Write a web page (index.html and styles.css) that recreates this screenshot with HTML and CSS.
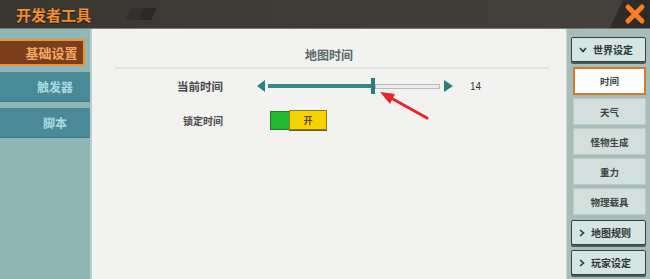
FILE: index.html
```html
<!DOCTYPE html>
<html>
	<head>
		<title>开发者工具</title>
		<link rel="stylesheet" href="styles.css">
	</head>
	<body>
		<div class="window">
			<div class="topbar">
				<div class="title">开发者工具</div>
				<div class="deco"><span></span><span></span></div>
				<div class="spacer"></div>
				<div class="close-area">
					<svg class="close-icon" width="22" height="22" viewBox="0 0 22 22">
						<path d="M4 4 L18 18 M18 4 L4 18" stroke="#3a2418" stroke-width="7" stroke-linecap="round"/>
						<path d="M4 4 L18 18 M18 4 L4 18" stroke="#f77b2d" stroke-width="5" stroke-linecap="round"/>
					</svg>
				</div>
			</div>
			<div class="content">
				<div class="left-nav">
					<div class="nav-btn active">基础设置</div>
					<div class="nav-btn">触发器</div>
					<div class="nav-btn">脚本</div>
				</div>
				<div class="main">
					<div class="section-title">地图时间</div>
					<div class="section-line"></div>
					<div class="row row-time">
						<div class="label">当前时间</div>
						<div class="slider">
							<span class="arrow arrow-left"></span>
							<div class="track">
								<span class="fill"></span>
								<span class="thumb"></span>
								<span class="rest"></span>
							</div>
							<span class="arrow arrow-right"></span>
						</div>
						<div class="value">14</div>
					</div>
					<div class="row row-lock">
						<div class="label">锁定时间</div>
						<div class="toggle">
							<span class="toggle-on"></span>
							<span class="toggle-knob">开</span>
						</div>
					</div>
					<svg class="pointer" width="60" height="40" viewBox="0 0 60 40">
						<line x1="55" y1="31" x2="19" y2="11" stroke="#e8262a" stroke-width="3" stroke-linecap="round"/>
						<polygon points="8,5 23,7 18,17" fill="#e8262a"/>
					</svg>
				</div>
				<div class="right-nav">
					<div class="group-head">
						<svg width="8" height="6" viewBox="0 0 8 6"><path d="M1 1 L4 4.5 L7 1" stroke="#2c3634" stroke-width="1.6" fill="none"/></svg>
						<span>世界设定</span>
					</div>
					<div class="sub-item active">时间</div>
					<div class="sub-item">天气</div>
					<div class="sub-item">怪物生成</div>
					<div class="sub-item">重力</div>
					<div class="sub-item">物理载具</div>
					<div class="group-head">
						<svg width="6" height="8" viewBox="0 0 6 8"><path d="M1 1 L4.5 4 L1 7" stroke="#2c3634" stroke-width="1.6" fill="none"/></svg>
						<span>地图规则</span>
					</div>
					<div class="group-head">
						<svg width="6" height="8" viewBox="0 0 6 8"><path d="M1 1 L4.5 4 L1 7" stroke="#2c3634" stroke-width="1.6" fill="none"/></svg>
						<span>玩家设定</span>
					</div>
				</div>
			</div>
		</div>
	</body>
</html>
```

FILE: styles.css
```css
body {
	margin: 0;
	overflow: hidden;
	background-color: #f2f2f0;
	font-family: "Noto Sans CJK SC", "Noto Sans", sans-serif;
}

.window {
	width: 650px;
	height: 279px;
	display: flex;
	flex-direction: column;
	overflow: hidden;
}

.topbar {
	height: 28px;
	display: flex;
	align-items: center;
	background: linear-gradient(90deg, #3a3733 0%, #45413c 100%);
	border-bottom: 1px solid #7c7873;
}

.title {
	margin-left: 16px;
	color: #f08e2c;
	font-size: 15px;
	font-weight: 700;
	line-height: 15px;
	text-shadow: 0 1px 1px rgba(0, 0, 0, 0.5);
}

.deco {
	margin-left: 37px;
	display: flex;
	transform: skewX(-25deg);
}

.deco span {
	width: 13px;
	height: 12px;
	background-color: #33302d;
}

.deco span + span {
	background-color: #2b2927;
}

.spacer {
	flex: 1;
}

.close-area {
	width: 40px;
	height: 28px;
	display: flex;
	align-items: center;
	justify-content: flex-end;
	padding-right: 4px;
	box-sizing: border-box;
	background-color: #2e2c2a;
	clip-path: polygon(13px 0, 100% 0, 100% 100%, 0 100%);
}

.content {
	flex: 1;
	display: flex;
}

.left-nav {
	width: 92px;
	padding-top: 10px;
	display: flex;
	flex-direction: column;
	gap: 6px;
	background-color: #8eb7b5;
	border-right: 2px solid #b6cfcd;
	box-sizing: border-box;
}

.nav-btn {
	width: 90px;
	height: 30px;
	padding-left: 20px;
	box-sizing: border-box;
	display: flex;
	align-items: center;
	justify-content: center;
	background-color: #4a8997;
	border-bottom: 1px solid #3f7884;
	color: #a9dbe4;
	font-size: 12px;
	font-weight: 700;
}

.nav-btn.active {
	width: 85px;
	height: 27px;
	background-color: #7a3e1d;
	border: 2px solid #f0932e;
	border-left: none;
	color: #f5a965;
	font-size: 13px;
}

.main {
	flex: 1;
	position: relative;
	padding-top: 19px;
	background-color: #f2f2f0;
}

.section-title {
	text-align: center;
	color: #56676a;
	font-size: 12px;
	font-weight: 700;
	line-height: 14px;
}

.section-line {
	height: 2px;
	margin: 5px 17px 0 23px;
	background-color: #e1e1df;
}

.row {
	display: flex;
	align-items: center;
}

.row-time {
	height: 18px;
	margin-top: 8px;
}

.row-lock {
	height: 22px;
	margin-top: 14px;
}

.label {
	width: 131px;
	margin-right: 34px;
	text-align: right;
	color: #4a4a4a;
	font-size: 10px;
	font-weight: 700;
}

.row-time .label {
	font-size: 11.5px;
}

.slider {
	display: flex;
	align-items: center;
}

.arrow {
	width: 0;
	height: 0;
	border-top: 6px solid transparent;
	border-bottom: 6px solid transparent;
}

.arrow-left {
	border-right: 8px solid #2b8281;
	margin-right: 3px;
}

.arrow-right {
	border-left: 9px solid #2b8281;
	margin-left: 4px;
}

.track {
	width: 172px;
	height: 16px;
	display: flex;
	align-items: center;
}

.fill {
	width: 103px;
	height: 4px;
	background-color: #338888;
}

.thumb {
	width: 4px;
	height: 16px;
	background-color: #2b7a80;
}

.rest {
	flex: 1;
	height: 3px;
	background-color: #ebebea;
	border: 1px solid #b9b9b9;
}

.value {
	margin-left: 17px;
	color: #333333;
	font-family: "Liberation Sans", sans-serif;
	font-size: 10px;
}

.toggle {
	margin-left: 13px;
	display: flex;
	align-items: center;
}

.toggle-on {
	width: 18px;
	height: 17px;
	background-color: #22b833;
	border: 1px solid #1c7a25;
	border-right: none;
}

.toggle-knob {
	width: 38px;
	height: 20px;
	box-sizing: border-box;
	display: flex;
	align-items: center;
	justify-content: center;
	background-color: #f7d200;
	border: 1px solid #8c7c1e;
	box-shadow: 0 1px 0 #6a5c16;
	color: #5a4a00;
	font-size: 9px;
	font-weight: 700;
}

.pointer {
	position: absolute;
	left: 280px;
	top: 58px;
	pointer-events: none;
}

.right-nav {
	width: 84px;
	padding: 8px 4px 0 4px;
	box-sizing: border-box;
	display: flex;
	flex-direction: column;
	background-color: #a7bdb9;
	border-left: 1px solid #c6d4d2;
}

.group-head {
	height: 25px;
	margin-bottom: 5px;
	display: flex;
	align-items: center;
	gap: 6px;
	padding-left: 7px;
	box-sizing: border-box;
	background-color: #d4e5e3;
	border: 1px solid #36423f;
	border-radius: 2px;
	box-shadow: 0 2px 0 #4d5b58;
	color: #2c3634;
	font-size: 10px;
	font-weight: 700;
}

.sub-item + .group-head {
	margin-top: 2px;
}

.sub-item {
	height: 27px;
	margin: 0 0 3px 2px;
	display: flex;
	align-items: center;
	justify-content: center;
	background-color: #d2dfdc;
	border: 1px solid #bccbc8;
	box-sizing: border-box;
	color: #3a4442;
	font-size: 9.5px;
	font-weight: 700;
}

.sub-item.active {
	height: 28px;
	background-color: #ffffff;
	border: 2px solid #d3792b;
}
```
